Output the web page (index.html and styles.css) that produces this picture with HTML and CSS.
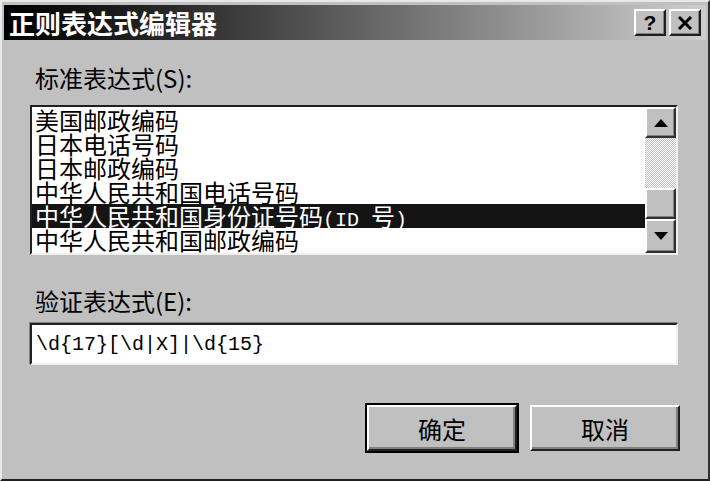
FILE: index.html
```html
<!DOCTYPE html>
<html lang="zh-CN">

<head>
    <meta http-equiv="Content-Type" content="text/html; charset=UTF-8">
    <meta name="viewport" content="width=device-width, initial-scale=1.0">
    <title>正则表达式编辑器</title>
    <link rel="stylesheet" href="styles.css">
</head>

<body>
    <div class="window">
        <div class="titlebar">
            <span class="title">正则表达式编辑器</span>
            <div class="title-btns">
                <button class="tbtn">?</button>
                <button class="tbtn">
                    <svg width="16" height="14" viewBox="0 0 16 14">
                        <path d="M2 1 L14 13 M14 1 L2 13" stroke="#000" stroke-width="3" fill="none" />
                    </svg>
                </button>
            </div>
        </div>

        <div class="content">
            <label class="label label-s">标准表达式(S):</label>
            <div class="listbox">
                <ul class="items">
                    <li>美国邮政编码</li>
                    <li>日本电话号码</li>
                    <li>日本邮政编码</li>
                    <li>中华人民共和国电话号码</li>
                    <li class="selected">中华人民共和国身份证号码<span class="half">(ID </span>号<span class="half">)</span></li>
                    <li>中华人民共和国邮政编码</li>
                </ul>
                <div class="scrollbar">
                    <div class="sb-btn">
                        <svg width="14" height="8" viewBox="0 0 14 8"><path d="M0 8 L7 0 L14 8 Z" fill="#000" /></svg>
                    </div>
                    <div class="sb-track"></div>
                    <div class="sb-thumb"></div>
                    <div class="sb-btn sb-down">
                        <svg width="14" height="8" viewBox="0 0 14 8"><path d="M0 0 L14 0 L7 8 Z" fill="#000" /></svg>
                    </div>
                </div>
            </div>

            <label class="label label-e" for="expr">验证表达式(E):</label>
            <div class="input-box">
                <input type="text" id="expr" class="expr" value="\d{17}[\d|X]|\d{15}">
            </div>

            <div class="actions">
                <button class="btn btn-default">确定</button>
                <button class="btn">取消</button>
            </div>
        </div>
    </div>
</body>

</html>
```

FILE: styles.css
```css
body {
    margin: 0;
    background: #c0c0c0;
    font-family: "Noto Sans CJK SC", sans-serif;
}

.window {
    width: 710px;
    height: 481px;
    box-sizing: border-box;
    background: #c0c0c0;
    border: 2px solid;
    border-color: #e8e8e8 #303030 #202020 #e8e8e8;
    padding: 3px 2px 0 2px;
}

.titlebar {
    height: 35px;
    display: flex;
    align-items: center;
    justify-content: space-between;
    background: linear-gradient(to right, #000000, #2a2a2a 25%, #cfcfcf);
}

.title {
    color: #ffffff;
    font-size: 26px;
    font-weight: bold;
    line-height: 35px;
    padding-left: 5px;
}

.title-btns {
    display: flex;
    gap: 3px;
    margin-right: 5px;
}

.tbtn {
    width: 32px;
    height: 27px;
    box-sizing: border-box;
    padding: 0;
    background: #c0c0c0;
    border: 2px solid;
    border-color: #ffffff #202020 #202020 #ffffff;
    box-shadow: inset -1px -1px #808080;
    font-family: "Liberation Sans", sans-serif;
    font-weight: bold;
    font-size: 21px;
    line-height: 22px;
    color: #000;
    display: flex;
    align-items: center;
    justify-content: center;
}

.content {
    padding: 0 26px 0 26px;
    display: flex;
    flex-direction: column;
}

.label {
    font-size: 24px;
    line-height: 30px;
    color: #000;
    padding-left: 5px;
}

.label-s {
    margin-top: 23px;
}

.listbox {
    margin-top: 12px;
    width: 648px;
    height: 150px;
    box-sizing: border-box;
    background: #ffffff;
    border: 2px solid;
    border-color: #202020 #f0f0f0 #f0f0f0 #202020;
    display: flex;
}

.items {
    list-style: none;
    margin: 0;
    padding: 1px 0 0 0;
    flex: 1;
    overflow: hidden;
}

.items li {
    font-size: 24px;
    line-height: 24px;
    height: 24px;
    padding-left: 3px;
    color: #000;
    white-space: pre;
}

.items li.selected {
    background: #141414;
    color: #ffffff;
}

.half {
    font-family: "Liberation Mono", monospace;
    font-size: 20px;
}

.scrollbar {
    width: 31px;
    display: flex;
    flex-direction: column;
}

.sb-btn {
    height: 31px;
    box-sizing: border-box;
    background: #c0c0c0;
    border: 2px solid;
    border-color: #ffffff #303030 #303030 #ffffff;
    box-shadow: inset -1px -1px #808080;
    display: flex;
    align-items: center;
    justify-content: center;
}

.sb-down {
    height: 34px;
}

.sb-track {
    height: 50px;
    background: repeating-conic-gradient(#ffffff 0 25%, #c0c0c0 0 50%);
    background-size: 2px 2px;
}

.sb-thumb {
    height: 31px;
    box-sizing: border-box;
    background: #c0c0c0;
    border: 2px solid;
    border-color: #ffffff #303030 #303030 #ffffff;
    box-shadow: inset -1px -1px #808080;
}

.label-e {
    margin-top: 31px;
}

.input-box {
    margin-top: 7px;
    width: 648px;
    height: 42px;
    box-sizing: border-box;
    background: #ffffff;
    border: 2px solid;
    border-color: #202020 #f0f0f0 #f0f0f0 #202020;
    box-shadow: -1px -1px 0 #808080;
    display: flex;
    align-items: center;
}

.expr {
    border: none;
    outline: none;
    background: transparent;
    width: 100%;
    padding: 0 0 0 4px;
    font-family: "Liberation Mono", monospace;
    font-size: 20px;
    color: #000;
}

.actions {
    margin-top: 40px;
    display: flex;
    justify-content: flex-end;
    gap: 13px;
}

.btn {
    width: 150px;
    height: 46px;
    box-sizing: border-box;
    background: #c0c0c0;
    border: 2px solid;
    border-color: #ffffff #202020 #202020 #ffffff;
    box-shadow: inset -2px -2px #808080;
    font-family: "Noto Sans CJK SC", sans-serif;
    font-size: 24px;
    color: #000;
    cursor: pointer;
}

.btn-default {
    outline: 2px solid #000;
    outline-offset: 0;
}
```
